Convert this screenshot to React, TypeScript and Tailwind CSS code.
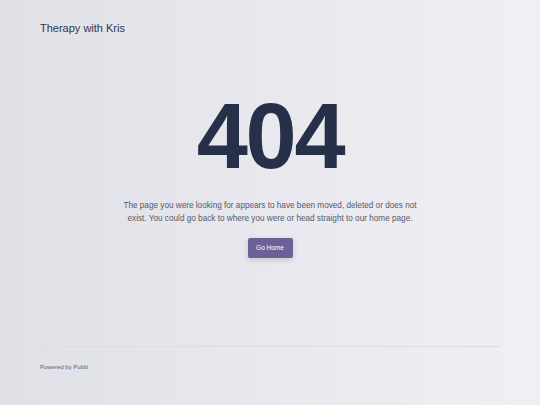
import React from 'react';

export default function App() {
  return (
    <div
      className="min-h-[405px] w-full flex flex-col bg-gradient-to-r from-[#e0e0e7] via-[#e8e8ee] to-[#efeff4] text-[#2b3044]"
      style={{ fontFamily: '"Liberation Sans", Arial, sans-serif' }}
    >
      <header className="px-10 pt-[15px] h-[70px]">
        <a href="#" className="text-[11px] text-[#323646]">Therapy with Kris</a>
      </header>

      <main className="flex flex-col items-center h-[276px]">
        <h1 className="mt-[20px] text-[92px] leading-[92px] font-bold text-[#263049] tracking-tight">404</h1>
        <p className="mt-[17px] w-[298px] text-center text-[8.2px] leading-[13px] text-[#555a6a]">
          The page you were looking for appears to have been moved, deleted or does not exist. You could go back to where you were or head straight to our home page.
        </p>
        <a
          href="#"
          className="mt-[13px] w-[45px] h-[20px] flex items-center justify-center rounded-[2px] bg-[#6c6097] text-white text-[6.5px] shadow-[0_2px_6px_rgba(0,0,0,0.15)]"
        >
          Go Home
        </a>
      </main>

      <footer className="mx-10 border-t border-[#dcdce3] pt-[16px]">
        <p className="text-[6px] text-[#5c6070]">Powered by Publii</p>
      </footer>
    </div>
  );
}
